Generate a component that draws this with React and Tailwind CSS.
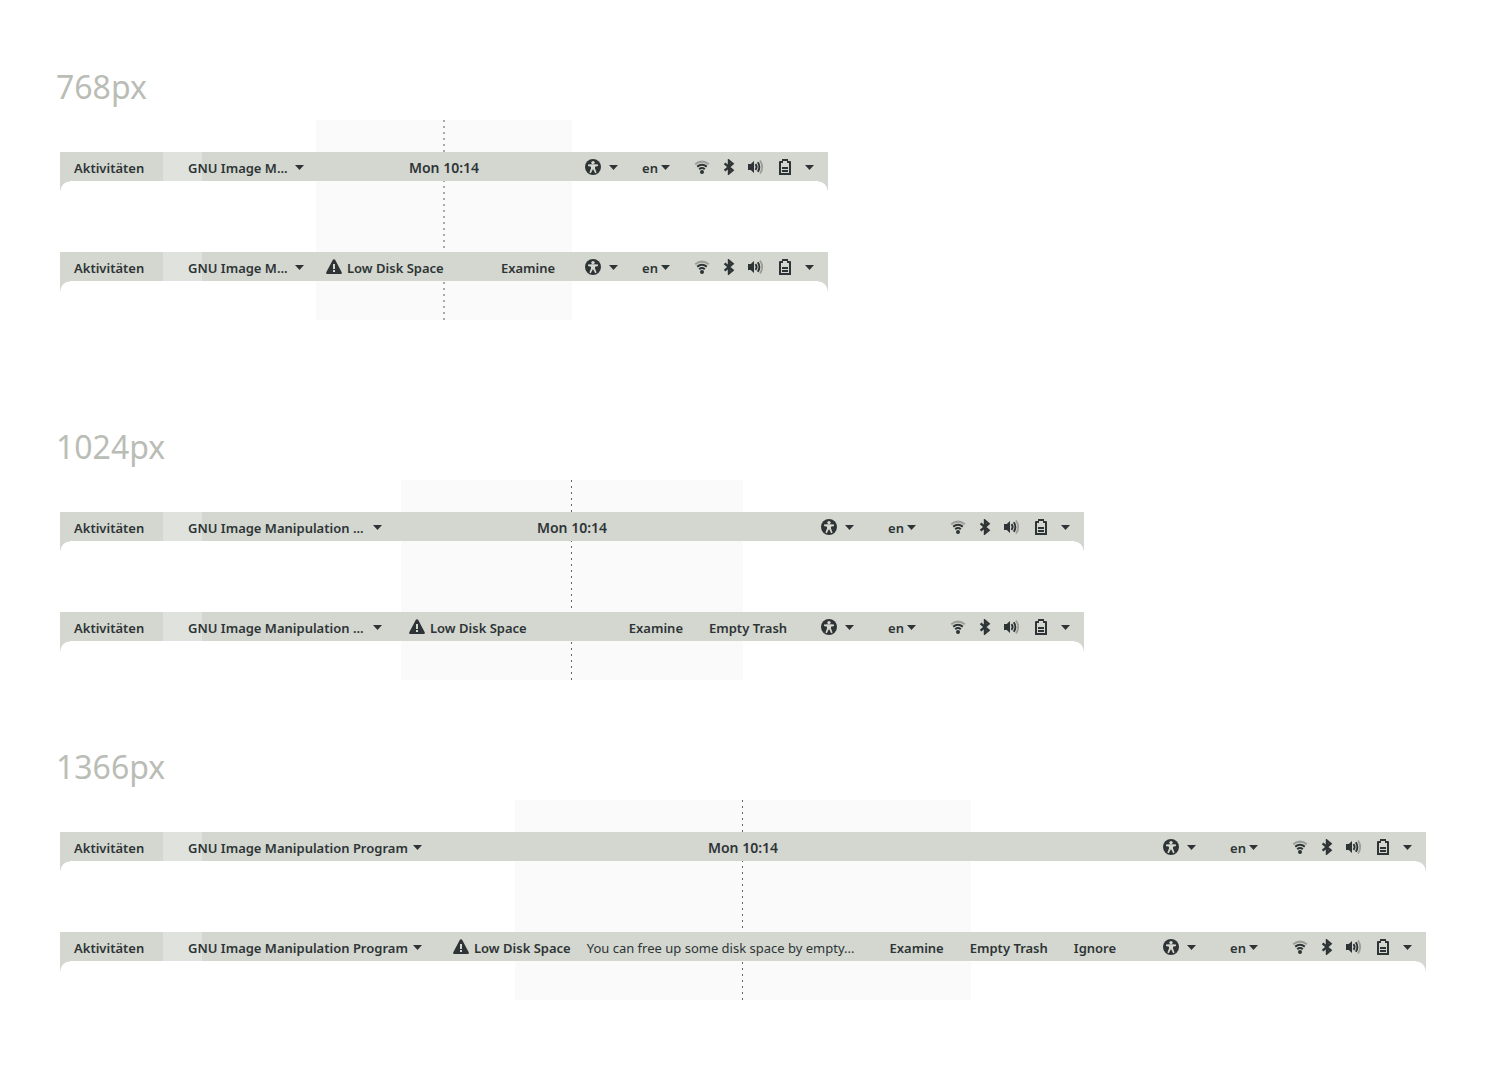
import React from "react";

function Caret() {
  return (
    <svg className="block shrink-0" width="9" height="7" viewBox="0 0 9 7" fill="currentColor" aria-hidden="true">
      <path d="M0 2h9L4.5 7z" />
    </svg>
  );
}

function Icon({ children }) {
  return (
    <svg className="block shrink-0" width="16" height="16" viewBox="0 0 16 16" fill="currentColor" aria-hidden="true">
      {children}
    </svg>
  );
}

function Label({ children, className = "" }) {
  return <span className={`block pt-0.5 ${className}`}>{children}</span>;
}

function AccessIcon() {
  return (
    <Icon>
      <circle cx="8" cy="8" r="8" />
      <circle cx="8" cy="3.6" r="1.7" className="fill-[#d3d7cf]" />
      <path d="M3 5.4 6.600 5.300h2.800L13 5.400v1.500L10 7.800v1.600l1.600 4.200-1.400.6L8.300 10.400h-.6l-1.900 3.800-1.400-.6L6 9.400V7.800L3 6.900z" className="fill-[#d3d7cf]" />
    </Icon>
  );
}

function WifiIcon() {
  return (
    <Icon>
      <path d="M1.200 5.200Q8 0 14.800 5.200" fill="none" stroke="currentColor" strokeWidth="2" opacity="0.35" />
      <path d="M3.200 7.600Q8 4 12.800 7.600" fill="none" stroke="currentColor" strokeWidth="2" />
      <path d="M5.200 10.200Q8 7.800 10.800 10.200" fill="none" stroke="currentColor" strokeWidth="2" />
      <circle cx="8" cy="13" r="2" />
    </Icon>
  );
}

function BluetoothIcon() {
  return (
    <Icon>
      <path d="M3.600 4.300 11.500 11.200 8 14.200V1.800L11.500 4.800 3.600 11.700" fill="none" stroke="currentColor" strokeWidth="2.400" />
    </Icon>
  );
}

function VolumeIcon() {
  return (
    <Icon>
      <path d="M0 5h2.800L6 2v12l-3.200-3H0z" />
      <path d="M7.500 5.200Q9.800 8 7.500 10.800" fill="none" stroke="currentColor" strokeWidth="1.900" />
      <path d="M9.800 3.300Q13 8 9.800 12.700" fill="none" stroke="currentColor" strokeWidth="1.900" />
      <path d="M12 1.500Q16.400 8 12 14.500" fill="none" stroke="currentColor" strokeWidth="1.800" opacity="0.35" />
    </Icon>
  );
}

function BatteryIcon() {
  return (
    <Icon>
      <path fillRule="evenodd" d="M5 0h6v2h2q1 0 1 1v13H2V3q0-1 1-1h2zM4 4v10h8V4h-2V2H6v2z" />
      <path d="M5 8h6v2H5zM5 11h6v2H5z" />
    </Icon>
  );
}

function WarningIcon() {
  return (
    <Icon>
      <path fillRule="evenodd" d="M8 .3q.9 0 1.400.9l6.300 12q.3.600 0 1.200-.3.600-1 .6H1.300q-.7 0-1-.6-.3-.6 0-1.200L6.600 1.200Q7.100.3 8 .3zM7 5v5h2V5zM7 11v2h2v-2z" />
    </Icon>
  );
}

function AppMenu({ label, width }) {
  return (
    <button
      type="button"
      className="flex h-full items-center bg-[linear-gradient(to_right,#e0e3dd_39px,transparent_39px)] pl-[25px] whitespace-nowrap"
    >
      <span className={`flex items-center justify-between ${width}`}>
        <Label>{label}</Label>
        <Caret />
      </span>
    </button>
  );
}

function Status({ gap }) {
  return (
    <div className={`flex h-full shrink-0 items-center pr-[14px] ${gap}`}>
      <button type="button" aria-label="Accessibility" className="flex items-center gap-2">
        <AccessIcon />
        <Caret />
      </button>
      <button type="button" className="flex items-center gap-[3px]">
        <Label>en</Label>
        <Caret />
      </button>
      <button type="button" aria-label="System menu" className="flex items-center gap-3">
        <span className="flex items-center gap-[11px]">
          <WifiIcon />
          <BluetoothIcon />
          <VolumeIcon />
        </span>
        <span className="flex items-center gap-3 pl-px">
          <BatteryIcon />
          <Caret />
        </span>
      </button>
    </div>
  );
}

function Bar({ children }) {
  return (
    <div className="relative">
      <div className="h-[29px] bg-[#d3d7cf]">{children}</div>
      <div className="flex h-[10px] justify-between">
        <span className="w-[10px] bg-[radial-gradient(circle_at_bottom_right,transparent_9px,#d3d7cf_10px)]" />
        <span className="w-[10px] bg-[radial-gradient(circle_at_bottom_left,transparent_9px,#d3d7cf_10px)]" />
      </div>
    </div>
  );
}

function Start({ label, width }) {
  return (
    <div className="flex h-full shrink-0 items-center">
      <button type="button" className="h-full w-[103px] pl-[14px] text-left">
        <Label>Aktivitäten</Label>
      </button>
      <AppMenu label={label} width={width} />
    </div>
  );
}

function Screen({ title, maxWidth, app, appWidth, statusGap, noticeMargin, body, actions, line }) {
  return (
    <section>
      <h2 className="-ml-1 h-16 pt-[7px] text-[32px] leading-[48px] font-normal text-[#babdb6]">{title}</h2>
      <div className={`relative w-full pt-8 pb-[29px] ${maxWidth}`}>
        <div className="absolute inset-0 grid grid-cols-3">
          <div className="col-start-2 flex justify-center bg-[#fafafa]">
            <div className={line} />
          </div>
        </div>
        <div className="flex flex-col gap-[61px]">
          <Bar>
            <div className="grid h-full grid-cols-[1fr_auto_1fr] items-center">
              <Start label={app} width={appWidth} />
              <button type="button" className="text-sm leading-5">
                <Label>Mon 10:14</Label>
              </button>
              <div className="flex h-full justify-end">
                <Status gap={statusGap} />
              </div>
            </div>
          </Bar>
          <Bar>
            <div className="flex h-full items-center">
              <Start label={app} width={appWidth} />
              <div className={`flex flex-1 items-center whitespace-nowrap ${noticeMargin}`}>
                <WarningIcon />
                <Label className="ml-[5px]">Low Disk Space</Label>
                {body && <Label className="ml-4 font-normal">{body}</Label>}
                <div className="ml-auto flex gap-[26px]">
                  {actions.map((a) => (
                    <button type="button" key={a}>
                      <Label>{a}</Label>
                    </button>
                  ))}
                </div>
              </div>
              <Status gap={statusGap} />
            </div>
          </Bar>
        </div>
      </div>
    </section>
  );
}

export default function App() {
  return (
    <main className="flex min-h-screen flex-col bg-white pt-14 pr-[74px] pb-20 pl-[60px] font-['Noto_Sans',sans-serif] text-[13px] leading-5 font-semibold text-[#2e3436]">
      <Screen
        title="768px"
        maxWidth="max-w-[768px]"
        app="GNU Image M..."
        appWidth="w-[116px]"
        statusGap="gap-6"
        noticeMargin="ml-[22px] mr-[30px]"
        actions={["Examine"]}
        line="w-[2px] bg-[repeating-linear-gradient(to_bottom,#aaaaaa_0_2px,transparent_2px_6px)]"
      />
      <div className="h-24" />
      <Screen
        title="1024px"
        maxWidth="max-w-[1024px]"
        app="GNU Image Manipulation ..."
        appWidth="w-[194px]"
        statusGap="gap-[34px]"
        noticeMargin="ml-[27px] mr-[34px]"
        actions={["Examine", "Empty Trash"]}
        line="w-px bg-[repeating-linear-gradient(to_bottom,#666666_0_2px,transparent_2px_6px)]"
      />
      <div className="h-14" />
      <Screen
        title="1366px"
        maxWidth="max-w-[1366px]"
        app="GNU Image Manipulation Program"
        appWidth="w-[234px]"
        statusGap="gap-[34px]"
        noticeMargin="ml-[31px] mr-[47px]"
        body="You can free up some disk space by empty..."
        actions={["Examine", "Empty Trash", "Ignore"]}
        line="w-px bg-[repeating-linear-gradient(to_bottom,#666666_0_2px,transparent_2px_6px)]"
      />
    </main>
  );
}
